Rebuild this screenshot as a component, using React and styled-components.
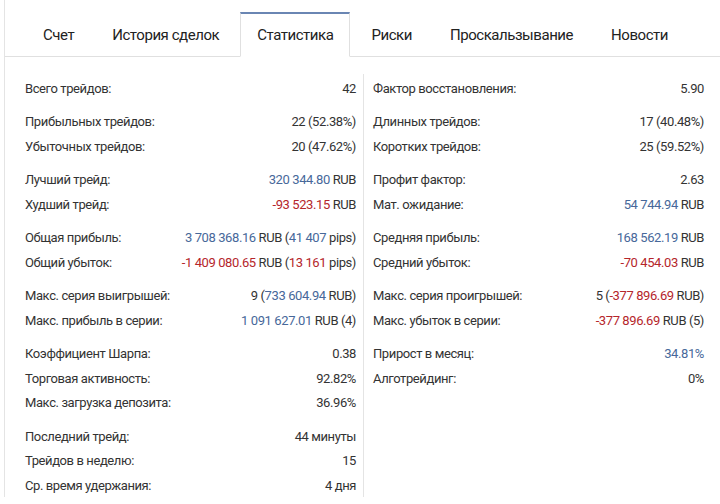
import styled, { createGlobalStyle } from "styled-components";

const GlobalStyle = createGlobalStyle`
  html, body {
    margin: 0;
    padding: 0;
    background: #ffffff;
  }
  body {
    font-family: Roboto, "Noto Sans", "Liberation Sans", sans-serif;
    color: #333333;
  }
`;

const Panel = styled.div`
  margin-left: 4px;
  border-left: 1px solid #e4e4e4;
  height: 497px;
  display: flex;
  flex-direction: column;
`;

const TabBar = styled.ul`
  display: flex;
  margin: 0;
  padding: 12px 0 0 19px;
  list-style: none;
  border-bottom: 1px solid #e0e0e0;
`;

const Tab = styled.li`
  height: 42px;
  display: flex;
  align-items: center;
  margin: 0 2px -1px;
  padding: 0 16px;
  font-size: 15px;
  letter-spacing: -0.45px;
  color: #222222;
  border: 1px solid transparent;
  border-top: 2px solid transparent;
  ${({ $active }) =>
    $active &&
    `
    border-color: #e0e0e0;
    border-top-color: #6a86b3;
    border-bottom-color: #ffffff;
    background: #ffffff;
  `}
`;

const Columns = styled.div`
  display: grid;
  grid-template-columns: 358px 1fr;
  margin-top: 17px;
  flex: 1;
`;

const Column = styled.div`
  padding: ${({ $side }) => ($side === "left" ? "2px 7px 0 20px" : "2px 16px 0 9px")};
  border-left: ${({ $side }) => ($side === "left" ? "none" : "1px solid #e4e4e4")};
`;

const Group = styled.div`
  & + & {
    margin-top: 9px;
  }
`;

const Row = styled.div`
  display: flex;
  justify-content: space-between;
  align-items: center;
  height: 24.5px;
  font-size: 13px;
  letter-spacing: -0.4px;
`;

const Label = styled.span`
  color: #333333;
`;

const Value = styled.span`
  color: #333333;
  white-space: nowrap;
`;

const Num = styled.span`
  color: ${({ $tone }) => ($tone === "up" ? "#47689a" : "#b5262b")};
`;

const tabs = ["Счет", "История сделок", "Статистика", "Риски", "Проскальзывание", "Новости"];

const up = (v) => <Num $tone="up">{v}</Num>;
const down = (v) => <Num $tone="down">{v}</Num>;

const leftGroups = [
  [["Всего трейдов:", "42"]],
  [
    ["Прибыльных трейдов:", "22 (52.38%)"],
    ["Убыточных трейдов:", "20 (47.62%)"],
  ],
  [
    ["Лучший трейд:", <>{up("320 344.80")} RUB</>],
    ["Худший трейд:", <>{down("-93 523.15")} RUB</>],
  ],
  [
    ["Общая прибыль:", <>{up("3 708 368.16")} RUB ({up("41 407")} pips)</>],
    ["Общий убыток:", <>{down("-1 409 080.65")} RUB ({down("13 161")} pips)</>],
  ],
  [
    ["Макс. серия выигрышей:", <>9 ({up("733 604.94")} RUB)</>],
    ["Макс. прибыль в серии:", <>{up("1 091 627.01")} RUB (4)</>],
  ],
  [
    ["Коэффициент Шарпа:", "0.38"],
    ["Торговая активность:", "92.82%"],
    ["Макс. загрузка депозита:", "36.96%"],
  ],
  [
    ["Последний трейд:", "44 минуты"],
    ["Трейдов в неделю:", "15"],
    ["Ср. время удержания:", "4 дня"],
  ],
];

const rightGroups = [
  [["Фактор восстановления:", "5.90"]],
  [
    ["Длинных трейдов:", "17 (40.48%)"],
    ["Коротких трейдов:", "25 (59.52%)"],
  ],
  [
    ["Профит фактор:", "2.63"],
    ["Мат. ожидание:", <>{up("54 744.94")} RUB</>],
  ],
  [
    ["Средняя прибыль:", <>{up("168 562.19")} RUB</>],
    ["Средний убыток:", <>{down("-70 454.03")} RUB</>],
  ],
  [
    ["Макс. серия проигрышей:", <>5 ({down("-377 896.69")} RUB)</>],
    ["Макс. убыток в серии:", <>{down("-377 896.69")} RUB (5)</>],
  ],
  [
    ["Прирост в месяц:", up("34.81%")],
    ["Алготрейдинг:", "0%"],
  ],
];

function StatColumn({ side, groups }) {
  return (
    <Column $side={side}>
      {groups.map((group, gi) => (
        <Group key={gi}>
          {group.map(([label, value]) => (
            <Row key={label}>
              <Label>{label}</Label>
              <Value>{value}</Value>
            </Row>
          ))}
        </Group>
      ))}
    </Column>
  );
}

export default function App() {
  return (
    <>
      <GlobalStyle />
      <Panel>
        <TabBar>
          {tabs.map((t) => (
            <Tab key={t} $active={t === "Статистика"}>
              {t}
            </Tab>
          ))}
        </TabBar>
        <Columns>
          <StatColumn side="left" groups={leftGroups} />
          <StatColumn side="right" groups={rightGroups} />
        </Columns>
      </Panel>
    </>
  );
}
